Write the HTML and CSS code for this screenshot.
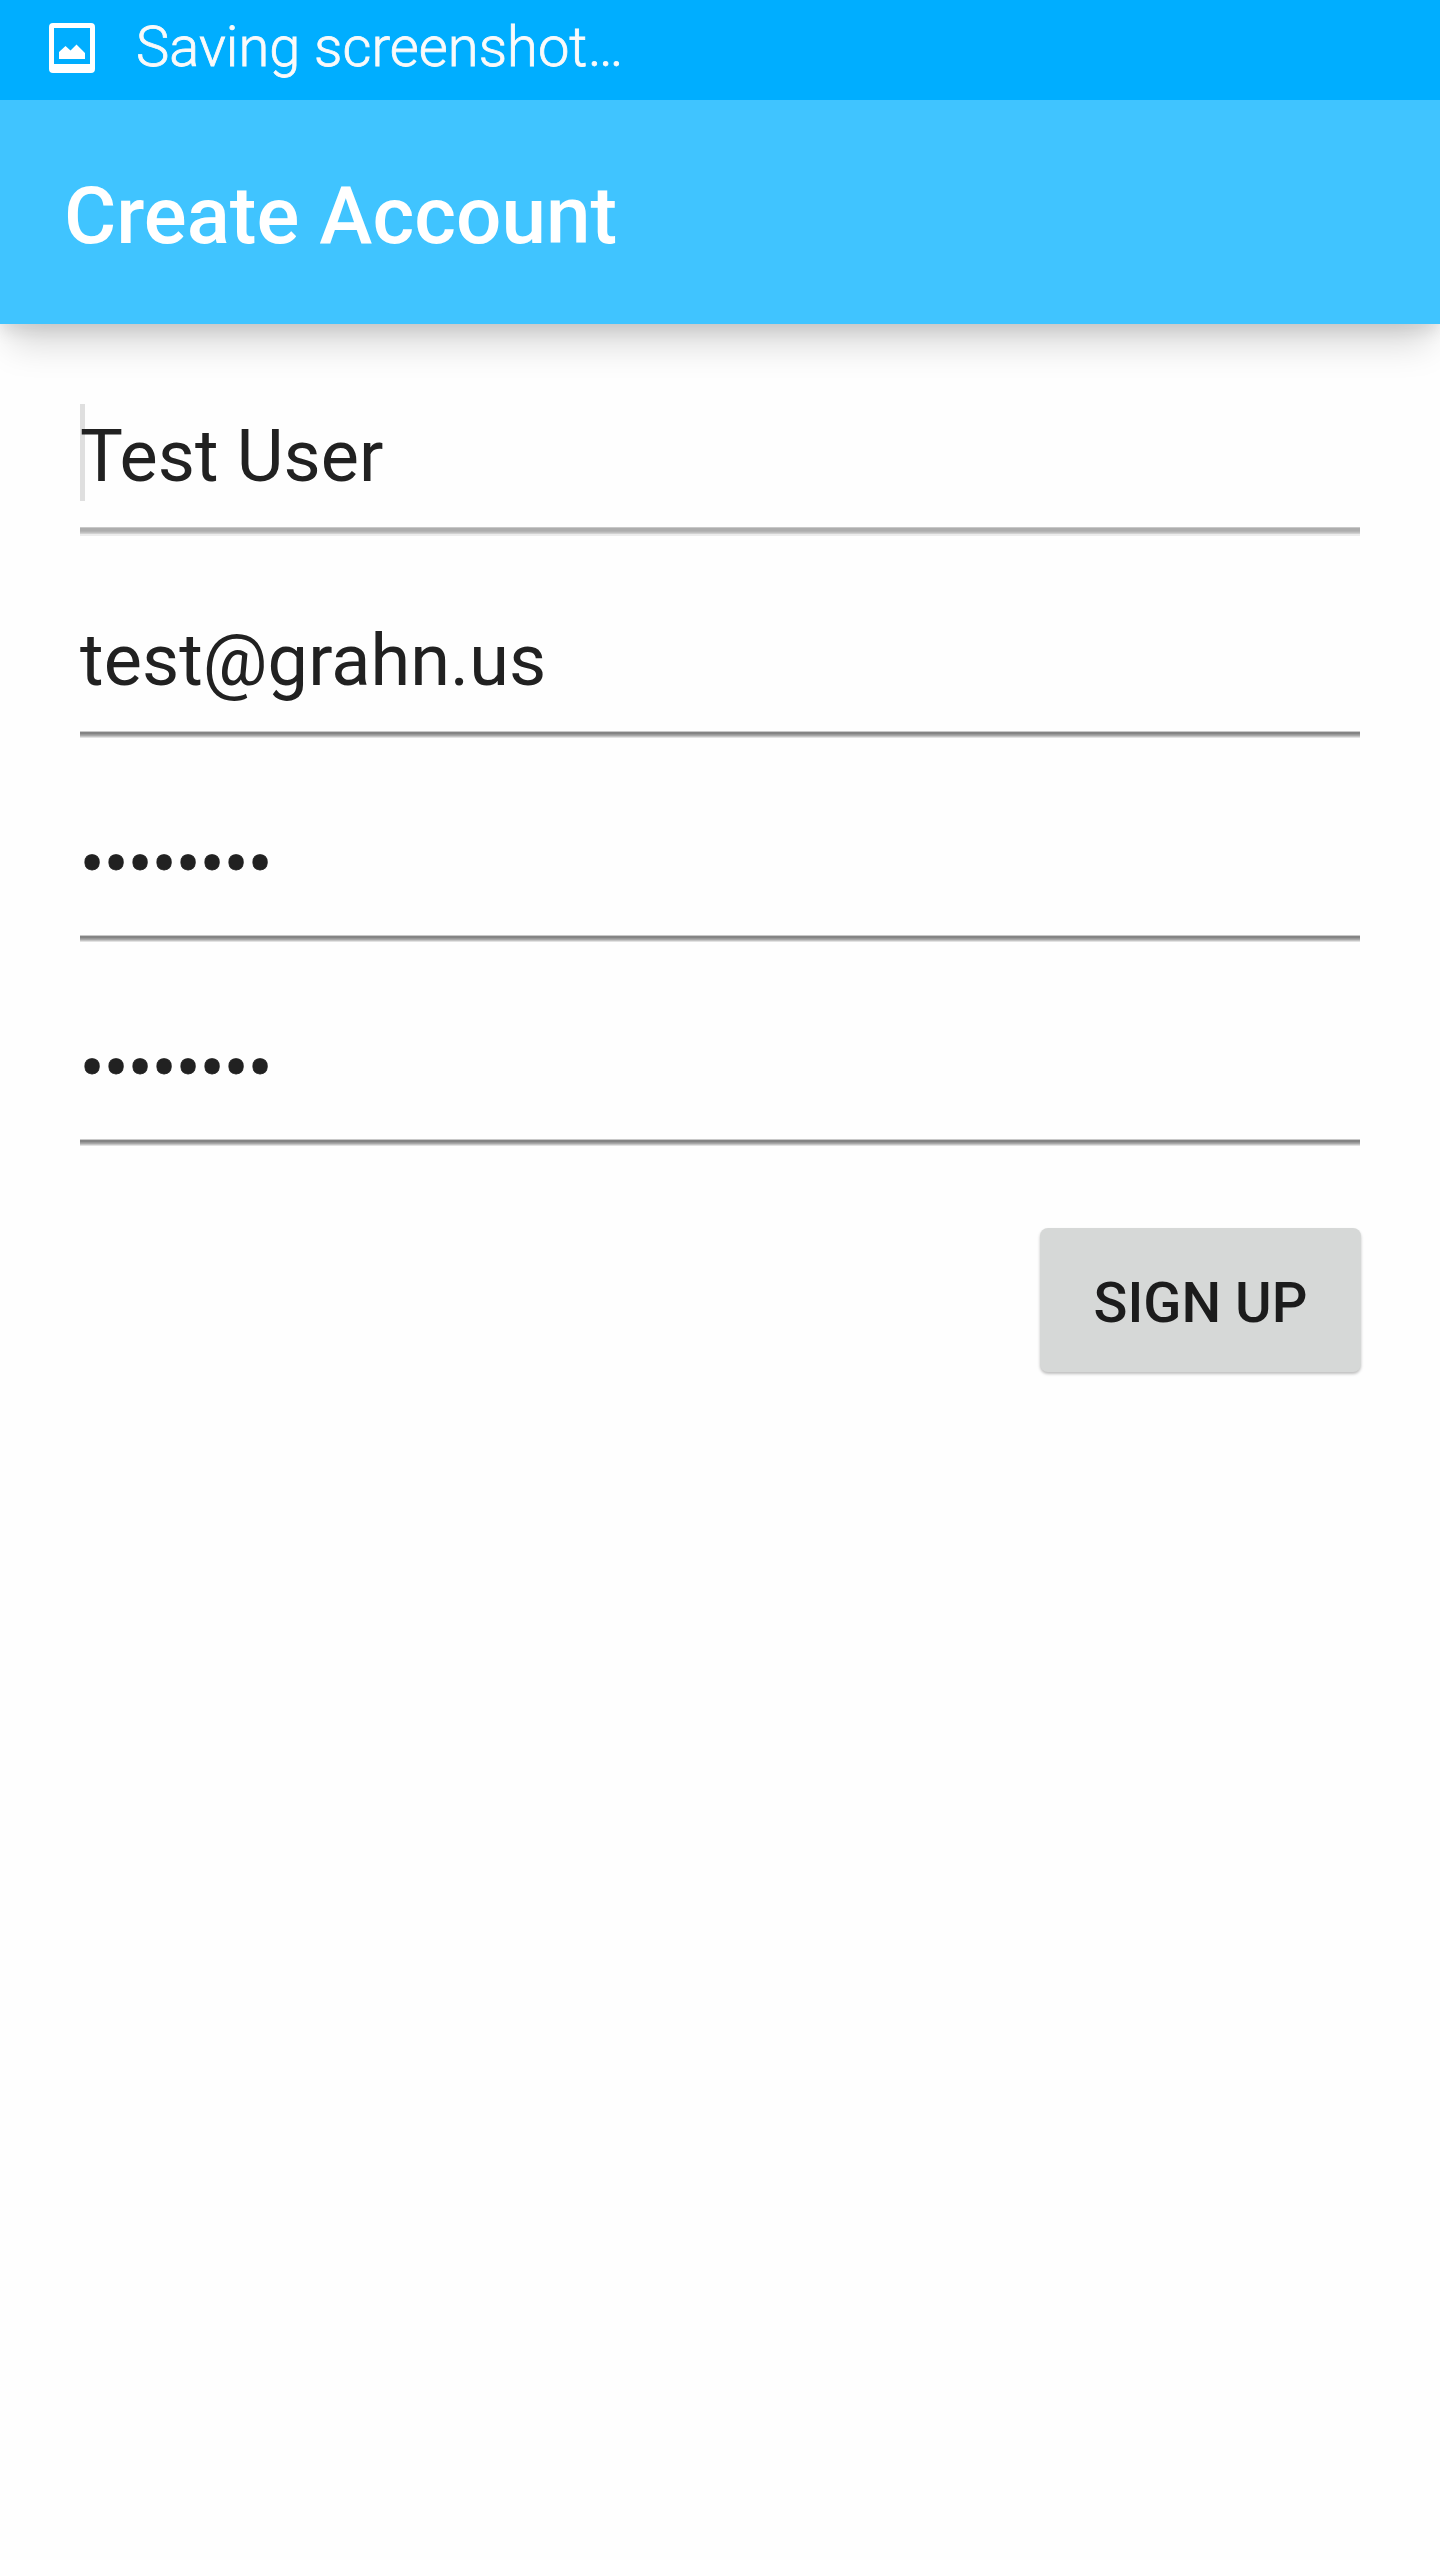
FILE: index.html
```html
<!DOCTYPE html>
<html lang="en">
<head>
<meta charset="utf-8">
<title>Create Account</title>
<link rel="stylesheet" href="styles.css">
</head>
<body>
<div class="status-bar">
  <svg class="status-icon" viewBox="0 0 46 50" width="46" height="50" aria-hidden="true">
    <path fill="#fff" fill-rule="evenodd" d="M4 0H42Q46 0 46 4V46Q46 50 42 50H4Q0 50 0 46V4Q0 0 4 0ZM5 5V41H41V5Z"/>
    <path fill="#fff" d="M10 36V29L16.500 23L21.500 27.500L27.500 21.500L36 30V36Z"/>
  </svg>
  <span class="status-text">Saving screenshot…</span>
</div>
<header class="app-bar"><h1 class="title">Create Account</h1></header>
<main class="form">
  <div class="field focused"><span class="value">Test User</span></div>
  <div class="field"><span class="value">test@grahn.us</span></div>
  <div class="field"><span class="value password">••••••••</span></div>
  <div class="field"><span class="value password">••••••••</span></div>
  <button class="sign-up" type="button">SIGN UP</button>
</main>
</body>
</html>
```
FILE: styles.css
```css
* { box-sizing: border-box; }
body {
  margin: 0;
  height: 2560px;
  overflow: hidden;
  background: #fefefe;
  color: #212121;
  font-family: Roboto, sans-serif;
}
.status-bar {
  position: relative;
  z-index: 1;
  display: flex;
  height: 100px;
  padding: 0 49px;
  background: #00aeff;
}
.status-icon { display: block; margin-top: 23px; }
.status-text {
  margin: 14px 0 0 41px;
  color: #fafafa;
  font-size: 56px;
  font-weight: 300;
  line-height: 66px;
  letter-spacing: .04px;
  -webkit-text-stroke: .8px #fafafa;
}
.app-bar {
  height: 224px;
  padding: 69px 64px 0;
  background: #40c4ff;
  box-shadow: 0 30px 34px -10px rgba(0, 0, 0, .15), 0 6px 16px rgba(0, 0, 0, .11);
}
.title {
  margin: 0;
  color: #fff;
  font-size: 80px;
  font-weight: 500;
  line-height: 94px;
  letter-spacing: .03px;
}
.form {
  display: flex;
  flex-direction: column;
  padding: 80px 80px 0;
}
.field {
  height: 204px;
  padding-top: 11px;
  background: linear-gradient(#c8c8c8 0 1px, #848484 1px 3px, #979797 3px 4px, #a8a8a8 4px 5px, #c4c4c4 5px 6px, #e2e2e2 6px 7px) 0 123px / 100% 7px no-repeat;
}
.value {
  display: block;
  font-size: 72px;
  line-height: 84px;
  letter-spacing: .1px;
}
.focused {
  background:
    linear-gradient(#dfdfdf, #dfdfdf) 0 0 / 5px 97px no-repeat,
    linear-gradient(#c8c8c8 0 1px, #adadad 1px 4px, #b4b4b4 4px 5px, #c0c0c0 5px 6px, #d0d0d0 6px 7px, #ececec 7px 9px) 0 123px / 100% 9px no-repeat;
}
.password {
  letter-spacing: -.3px;
  -webkit-text-stroke: .8px #212121;
}
.sign-up {
  align-self: flex-end;
  width: 321px;
  height: 144px;
  margin: 8px -1px 0 0;
  padding: 5px 0 0;
  border: 0;
  border-radius: 8px;
  background: #d6d8d7;
  box-shadow: 0 2px 3px rgba(0, 0, 0, .25);
  color: #1c1c1c;
  font: 500 56px/66px Roboto, sans-serif;
}
```
